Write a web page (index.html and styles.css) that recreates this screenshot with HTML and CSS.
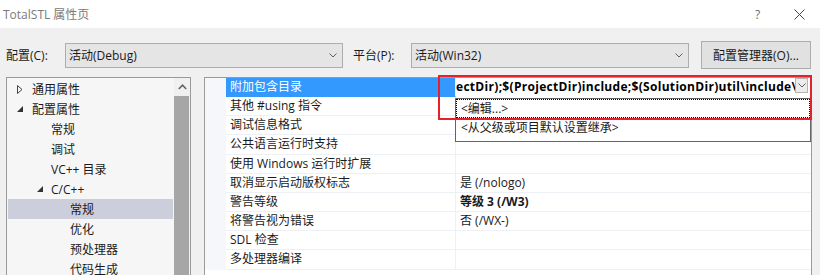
FILE: index.html
```html
<!DOCTYPE html>
<html>
<head>
<meta charset="utf-8">
<link rel="stylesheet" href="styles.css">
</head>
<body>
<div class="titlebar">
  <span class="title">TotalSTL 属性页</span>
  <span class="help">?</span>
  <span class="close"><svg width="11" height="11" viewBox="0 0 11 11"><path d="M0.5 0.5 L10.5 10.5 M10.5 0.5 L0.5 10.5" stroke="#444" stroke-width="1" fill="none"/></svg></span>
</div>
<div class="toolbar">
  <span class="label label-config">配置(C):</span>
  <div class="combo"><span>活动(Debug)</span><svg class="chev" width="8" height="5" viewBox="0 0 8 5"><path d="M0.5 0.5 L4 4 L7.5 0.5" stroke="#606060" fill="none"/></svg></div>
  <span class="label label-platform">平台(P):</span>
  <div class="combo"><span>活动(Win32)</span><svg class="chev" width="8" height="5" viewBox="0 0 8 5"><path d="M0.5 0.5 L4 4 L7.5 0.5" stroke="#606060" fill="none"/></svg></div>
  <div class="button">配置管理器(O)...</div>
</div>
<div class="main">
  <div class="tree">
    <div class="tree-rows">
      <div class="node lv0"><svg class="tri" width="6" height="9" viewBox="0 0 6 9"><path d="M0.5 0.5 L5 4.5 L0.5 8.5 Z" fill="none" stroke="#444"/></svg><span>通用属性</span></div>
      <div class="node lv0"><svg class="tri" width="6" height="6" viewBox="0 0 6 6"><path d="M6 0 L6 6 L0 6 Z" fill="#333"/></svg><span>配置属性</span></div>
      <div class="node lv1"><span>常规</span></div>
      <div class="node lv1"><span>调试</span></div>
      <div class="node lv1"><span>VC++ 目录</span></div>
      <div class="node lv1 parent"><svg class="tri" width="6" height="6" viewBox="0 0 6 6"><path d="M6 0 L6 6 L0 6 Z" fill="#333"/></svg><span>C/C++</span></div>
      <div class="node lv2 selected"><span>常规</span></div>
      <div class="node lv2"><span>优化</span></div>
      <div class="node lv2"><span>预处理器</span></div>
      <div class="node lv2"><span>代码生成</span></div>
    </div>
    <div class="scrollbar">
      <div class="sb-up"><svg width="9" height="6" viewBox="0 0 9 6"><path d="M0.8 5 L4.5 1.2 L8.2 5" stroke="#606060" stroke-width="1.5" fill="none"/></svg></div>
      <div class="sb-thumb"></div>
    </div>
  </div>
  <div class="grid">
    <div class="row">
      <div class="margin"></div>
      <div class="name sel">附加包含目录</div>
      <div class="value edit"><span class="edit-text">ectDir);$(ProjectDir)include;$(SolutionDir)util\include\</span><span class="dd-btn"><svg width="8" height="5" viewBox="0 0 8 5"><path d="M0.5 0.5 L4 4 L7.5 0.5" stroke="#606060" fill="none"/></svg></span></div>
    </div>
    <div class="row"><div class="margin"></div><div class="name">其他 #using 指令</div><div class="value"></div></div>
    <div class="row"><div class="margin"></div><div class="name">调试信息格式</div><div class="value"></div></div>
    <div class="row"><div class="margin"></div><div class="name">公共语言运行时支持</div><div class="value"></div></div>
    <div class="row"><div class="margin"></div><div class="name">使用 Windows 运行时扩展</div><div class="value"></div></div>
    <div class="row"><div class="margin"></div><div class="name">取消显示启动版权标志</div><div class="value">是 (/nologo)</div></div>
    <div class="row"><div class="margin"></div><div class="name">警告等级</div><div class="value bold">等级 3 (/W3)</div></div>
    <div class="row"><div class="margin"></div><div class="name">将警告视为错误</div><div class="value">否 (/WX-)</div></div>
    <div class="row"><div class="margin"></div><div class="name">SDL 检查</div><div class="value"></div></div>
    <div class="row"><div class="margin"></div><div class="name">多处理器编译</div><div class="value"></div></div>
    <div class="dropdown">
      <div class="dd-item focus">&lt;编辑...&gt;</div>
      <div class="dd-item">&lt;从父级或项目默认设置继承&gt;</div>
    </div>
  </div>
</div>
<div class="highlight"></div>
</body>
</html>
```
FILE: styles.css
```css
html, body {
  margin: 0;
  padding: 0;
}
body {
  width: 820px;
  height: 275px;
  overflow: hidden;
  background: #f0f0f0;
  font-family: "Open Sans", "Noto Sans CJK SC", sans-serif;
  font-size: 12px;
  color: #1a1a1a;
  position: relative;
}
.titlebar {
  height: 28px;
  background: #ffffff;
  display: flex;
  align-items: center;
  padding-left: 3px;
}
.title {
  color: #7a7a7a;
  font-size: 12px;
  flex: 1;
}
.help {
  color: #6a6a6a;
  font-size: 12px;
  width: 39px;
}
.close {
  display: flex;
  width: 22px;
  margin-right: 4px;
  margin-top: 1px;
}
.toolbar {
  display: flex;
  align-items: center;
  height: 28px;
  margin-top: 13px;
  padding-left: 6px;
}
.label {
  white-space: nowrap;
}
.label-config { width: 59px; }
.label-platform { width: 58px; margin-left: 10px; }
.combo {
  box-sizing: border-box;
  width: 278px;
  height: 25px;
  border: 1px solid #adadad;
  background: #e5e5e5;
  display: flex;
  align-items: center;
  justify-content: space-between;
  padding: 0 5px 0 3px;
}
.chev { margin-top: 1px; }
.button {
  box-sizing: border-box;
  margin-left: 12px;
  width: 110px;
  height: 28px;
  border: 1px solid #adadad;
  background: #e1e1e1;
  display: flex;
  align-items: center;
  justify-content: center;
}
.main {
  display: flex;
  gap: 13px;
  margin-top: 8px;
  padding-left: 6px;
  height: 198px;
  overflow: hidden;
}
.tree {
  box-sizing: border-box;
  width: 185px;
  height: 220px;
  border: 1px solid #9a9a9a;
  background: #f6f6f6;
  display: flex;
}
.tree-rows {
  flex: 1;
  padding: 1px 0 0 1px;
  margin-right: 1px;
}
.node {
  height: 20px;
  display: flex;
  align-items: center;
  white-space: nowrap;
  position: relative;
}
.node .tri { position: absolute; }
.lv0 { padding-left: 24px; }
.lv0 .tri { left: 9px; }
.lv1 { padding-left: 43px; }
.lv1 .tri { left: 29px; }
.lv2 { padding-left: 62px; }
.selected { background: #cccedb; }
.scrollbar {
  width: 16px;
  display: flex;
  flex-direction: column;
  background: #f0f0f0;
}
.sb-up {
  height: 18px;
  display: flex;
  align-items: center;
  justify-content: center;
}
.sb-thumb {
  flex: 1;
  background: #a6a6a6;
  margin: 0 1px 0 0;
}
.grid {
  box-sizing: border-box;
  width: 608px;
  height: 220px;
  border: 1px solid #9a9a9a;
  background: #ffffff;
  position: relative;
}
.row {
  display: flex;
  height: 19.17px;
}
.margin {
  width: 21px;
  background: #f5f7fb;
}
.name, .value {
  box-sizing: border-box;
  border-bottom: 1px solid #edf0f5;
  padding-left: 4px;
  line-height: 18px;
  white-space: nowrap;
  overflow: hidden;
}
.name {
  width: 230px;
  border-right: 1px solid #edf0f5;
}
.value { flex: 1; }
.name.sel {
  background: #3399ff;
  color: #ffffff;
  border-bottom-color: #3399ff;
}
.bold { font-weight: bold; }
.value.edit {
  padding-left: 0;
  display: flex;
  align-items: flex-start;
  border-bottom-color: #ffffff;
}
.edit-text {
  font-weight: bold;
  letter-spacing: 0.3px;
  width: 339px;
  overflow: hidden;
  white-space: nowrap;
  color: #000;
}
.dd-btn {
  box-sizing: border-box;
  width: 13px;
  height: 15px;
  margin-top: 0px;
  border: 1px solid #b4b4b4;
  background: #ececec;
  display: flex;
  align-items: center;
  justify-content: center;
}
.dropdown {
  position: absolute;
  left: 250px;
  top: 20px;
  width: 356px;
  height: 44px;
  box-sizing: border-box;
  border: 1px solid #646464;
  background: #ffffff;
}
.dd-item {
  box-sizing: border-box;
  height: 19px;
  line-height: 17px;
  padding-left: 4px;
  border: 1px solid transparent;
  white-space: nowrap;
}
.dd-item.focus {
  border: 1px dotted #000;
}
.highlight {
  position: absolute;
  left: 438px;
  top: 75px;
  width: 374px;
  height: 45px;
  box-sizing: border-box;
  border: 2px solid #e8202a;
}
```
